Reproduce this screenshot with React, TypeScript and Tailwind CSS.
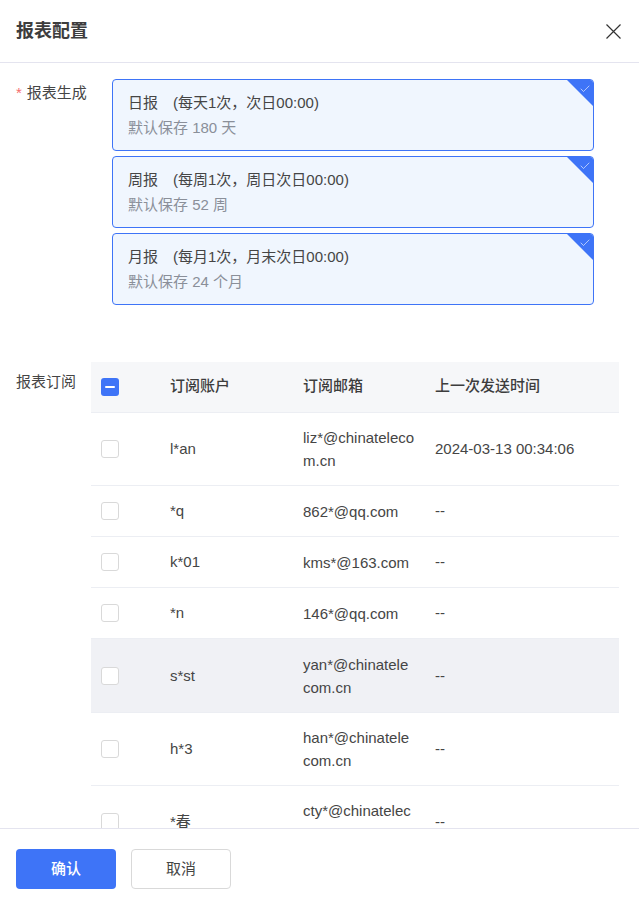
import { Check } from "lucide-react";

const reports = [
  { name: "日报", title: "(每天1次，次日00:00)", sub: "默认保存 180 天" },
  { name: "周报", title: "(每周1次，周日次日00:00)", sub: "默认保存 52 周" },
  { name: "月报", title: "(每月1次，月末次日00:00)", sub: "默认保存 24 个月" },
];

const rows = [
  { account: "l*an", email: "liz*@chinatelecom.cn", time: "2024-03-13 00:34:06", h: "h-[73px]" },
  { account: "*q", email: "862*@qq.com", time: "--", h: "h-[51px]" },
  { account: "k*01", email: "kms*@163.com", time: "--", h: "h-[51px]" },
  { account: "*n", email: "146*@qq.com", time: "--", h: "h-[51px]" },
  { account: "s*st", email: "yan*@chinatelecom.cn", time: "--", h: "h-[74px]", hover: true },
  { account: "h*3", email: "han*@chinatelecom.cn", time: "--", h: "h-[73px]" },
  { account: "*春", email: "cty*@chinatelecom.cn", time: "--", h: "h-[73px]" },
];

const grid = "grid grid-cols-[69px_133px_132px_1fr] items-center";

export default function App() {
  return (
    <div className="w-[639px] h-[902px] flex flex-col bg-white overflow-hidden text-[15px] text-[#454545] font-['Liberation_Sans','Noto_Sans_CJK_SC',sans-serif]">
      <div className="h-[63px] shrink-0 flex items-center justify-between pl-4 pr-[18px] border-b border-[#e4e4ef]">
        <span className="text-[18px] font-bold text-[#3d3d3d]">报表配置</span>
        <svg viewBox="0 0 15 15" className="w-[15px] h-[15px] text-[#333]" fill="none" stroke="currentColor" strokeWidth={1.2}>
          <path d="M0.5 0.5L14.5 14.5M14.5 0.5L0.5 14.5" />
        </svg>
      </div>

      <div className="flex-1 min-h-0 overflow-hidden">
        <div className="flex pt-4 pl-4">
          <div className="w-[96px] shrink-0 pt-[4px] leading-[20px]">
            <span className="text-[#f56c6c] mr-[5px]">*</span>报表生成
          </div>
          <div className="w-[482px] flex flex-col gap-[5px]">
            {reports.map((r) => (
              <div key={r.name} className="relative h-[72px] rounded-[4px] border border-[#3e74f7] bg-[#f0f6fe] pl-[15px] pt-[12px] overflow-hidden">
                <div className="leading-[22px]">
                  <span className="mr-[15px]">{r.name}</span>
                  {r.title}
                </div>
                <div className="mt-[3px] leading-[22px] text-[#8a8f99]">{r.sub}</div>
                <div className="absolute top-0 right-0 w-0 h-0 border-t-[26px] border-l-[26px] border-t-[#3e74f7] border-l-transparent" />
                <Check className="absolute top-[3px] right-[2px] w-[12px] h-[12px] text-white/60" strokeWidth={2} />
              </div>
            ))}
          </div>
        </div>

        <div className="flex pl-4 mt-[57px]">
          <div className="w-[75px] shrink-0 pt-[10px] leading-[20px]">报表订阅</div>
          <div className="w-[528px]">
            <div className={`${grid} h-[51px] bg-[#f6f7f9] border-b border-[#eceef3] font-medium text-[#3d3d3d]`}>
              <div className="pl-[10px]">
                <span className="flex w-[18px] h-[18px] items-center justify-center rounded-[3px] bg-[#3e74f7]">
                  <span className="w-[10px] h-[2px] rounded-[1px] bg-white" />
                </span>
              </div>
              <div className="pl-[10px] pb-[1px]">订阅账户</div>
              <div className="pl-[10px] pb-[1px]">订阅邮箱</div>
              <div className="pl-[10px] pb-[1px]">上一次发送时间</div>
            </div>
            {rows.map((r) => (
              <div key={r.account} className={`${grid} ${r.h} border-b border-[#eceef3] ${r.hover ? "bg-[#f0f1f5]" : ""}`}>
                <div className="pl-[10px]">
                  <span className="block w-[18px] h-[18px] rounded-[3px] border border-[#d9d9d9] bg-white" />
                </div>
                <div className="pl-[10px] pt-[1px]">{r.account}</div>
                <div className="px-[10px] leading-[23px] break-all">{r.email}</div>
                <div className="pl-[10px] pt-[1px]">{r.time}</div>
              </div>
            ))}
          </div>
        </div>
      </div>

      <div className="h-[74px] shrink-0 flex items-start gap-[15px] pl-4 pt-[20px] border-t border-[#e4e4ef] bg-white">
        <button className="w-[100px] h-[40px] pt-[1px] rounded-[4px] bg-[#3e74f7] font-medium text-white">确认</button>
        <button className="w-[100px] h-[40px] pt-[1px] rounded-[4px] border border-[#d9d9d9] bg-white">取消</button>
      </div>
    </div>
  );
}
